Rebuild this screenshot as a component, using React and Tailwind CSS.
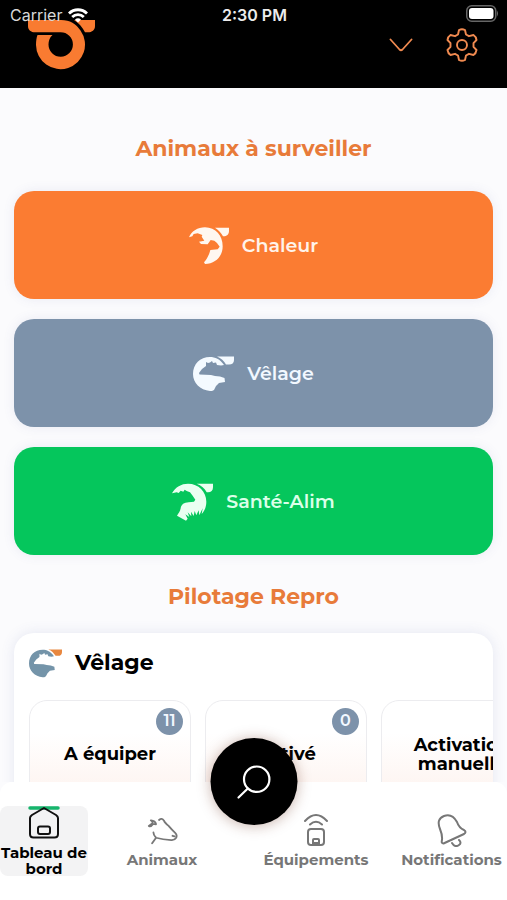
const heading = 'text-center text-[22px] leading-7 font-bold text-[#e87b3a]';

function BrandLogo() {
  return (
    <svg width="68" height="50" viewBox="0 0 68 50" aria-hidden="true">
      <path d="M0 0H33C42 0 48 4 52.500 10.500A24.500 24.500 0 1 1 8 25C8 21 8.500 17.500 9.500 15H24.500C21.500 17.500 20.500 21 20.500 24.500A12.200 12.200 0 1 0 32.500 12.300H7C3 12.300 0 10 0 6Z" fill="#f97b31" />
      <path d="M46 0H67V6C67 10 64 12.300 60 12.300H57C54 7 51 3 46 0Z" fill="#f97b31" />
    </svg>
  );
}

function HeatIcon() {
  return (
    <svg width="40" height="38" viewBox="0 0 120 114" fill="#fff7f0" aria-hidden="true">
      <path d="M0 31C8 12 26 1 48 1C80 1 101 26 101 58C101 88 80 110 48 111L45 106C54 96 60 84 64 69L86 67L92 59L84 48L76 41L65 39L56 52L36 51L30 44L46 41L38 29L40 24L26 19L14 21L10 28Z" />
      <path d="M78 2H120V12C120 22 113 28 104 28H102C96 17 88 8 78 2Z" />
    </svg>
  );
}

function CalvingIcon({ size = 41, color = '#f4faff', accent = '#f4faff' }) {
  return (
    <svg width={size} height={size * 36 / 41} viewBox="0 0 41 36" aria-hidden="true">
      <path d="M31 9C27 3 22 1 17 1C7 1 0 8 0 18C0 27 7 34 17 35L19 35L21 34L23 30L26 27L32 26L31.500 22L27 20.500L22 20L18 19L6.500 18.500L6 17L9 13L13 10L13 6L15 7L17 6.500L19 5L20 7L23 6.500L24 9L28 9.500Z" fill={color} />
      <path d="M24 0.500H41V4C41 7 39 8.500 36 8.500H33C31 5 28 2 24 0.500Z" fill={accent} />
    </svg>
  );
}

function HealthIcon() {
  return (
    <svg width="41" height="38" viewBox="0 0 123 114" fill="#eafff1" aria-hidden="true">
      <path d="M0 31C10 12 28 2 48 2C80 2 103 26 103 56C103 70 98 84 89 93L92 76L82 97L80 82L73 97L68 84L65 99L57 86L58 100L47 88L52 102L40 94L47 107L42 113L15 98C20 90 24 86 26 76C28 64 36 59 50 58L66 56L70 50L62 38L54 28L44 24L38 20L34 26L26 23L20 30L14 28Z" />
      <path d="M74 2H123V13C123 23 117 28 108 28H104C98 16 88 7 74 2Z" />
    </svg>
  );
}

function Watch({ color, label, children }) {
  return (
    <button type="button" className={`flex h-[108px] w-full items-center justify-center gap-[13px] rounded-[20px] pt-px text-[19px] leading-6 font-semibold shadow-[0_0_12px_rgba(80,90,160,0.10)] ${color}`}>
      {children}
      <span>{label}</span>
    </button>
  );
}

function Tile({ count, children }) {
  return (
    <button type="button" className="relative flex h-[110px] w-[162px] shrink-0 items-center justify-center rounded-[18px] border border-[#ececef] bg-linear-to-b from-white from-30% to-[#fdf1ec] text-center text-[18px] leading-[19px] font-bold text-black">
      {count !== undefined && (
        <span className="absolute top-[7px] right-[7px] flex size-[27px] items-center justify-center rounded-full bg-[#7d92aa] text-base font-semibold text-[#f2f8ff]">{count}</span>
      )}
      <span className="w-[110px]">{children}</span>
    </button>
  );
}

function NavItem({ label, active, children }) {
  return (
    <a href="#" aria-current={active ? 'page' : undefined} className={`flex h-[70px] flex-col items-center rounded-lg text-center text-[15px] leading-4 font-bold ${active ? 'gap-[5px] bg-[#f3f3f4] text-black' : 'gap-[5px] pt-[7px] text-[#777777]'}`}>
      <span className="flex h-[34px] shrink-0 items-center">{children}</span>
      <span>{label}</span>
    </a>
  );
}

export default function App() {
  return (
    <div className="flex h-screen flex-col overflow-hidden bg-[#fbfbfd] font-['Montserrat','Inter',sans-serif]">
      <header className="relative flex h-[88px] shrink-0 items-start justify-between bg-black px-7 pt-5">
        <div className="absolute inset-x-0 top-0 grid h-[30px] grid-cols-3 items-center pr-2 pl-[10px] font-['Inter',sans-serif] text-base leading-5 text-[#d8d8d8]">
          <span className="flex items-center gap-[6px]">
            Carrier
            <svg width="20" height="15" viewBox="0 0 20 15" fill="none" stroke="#fff" strokeWidth="2.800" aria-hidden="true">
              <path d="M1 5.500C6 0.500 14 0.500 19 5.500M4.200 9C7.500 5.800 12.500 5.800 15.800 9" />
              <path d="M10 14.500L7 11.500Q10 9 13 11.500Z" fill="#fff" stroke="none" />
            </svg>
          </span>
          <span className="text-center font-semibold text-[#ececec]">2:30 PM</span>
          <svg className="mb-[3px] justify-self-end" width="33" height="17" viewBox="0 0 33 17" aria-hidden="true">
            <rect x="0.750" y="0.750" width="29" height="15.500" rx="5" fill="none" stroke="#666" strokeWidth="1.500" />
            <rect x="3" y="3" width="24.500" height="11" rx="3" fill="#fff" />
            <path d="M31 5.500Q33 8.500 31 11.500Z" fill="#666" />
          </svg>
        </div>
        <BrandLogo />
        <div className="flex items-center gap-8 pt-2">
          <button type="button" aria-label="Ouvrir la liste">
            <svg width="24" height="14" viewBox="0 0 24 14" fill="none" stroke="#f08a50" strokeWidth="1.800" strokeLinecap="round" strokeLinejoin="round" aria-hidden="true"><path d="M1.500 1.500L10.500 11.500Q12 13 13.500 11.500L22.500 1.500" /></svg>
          </button>
          <button type="button" aria-label="Paramètres">
            <svg width="34" height="34" viewBox="0 0 34 34" fill="none" stroke="#f08a50" strokeWidth="1.900" strokeLinejoin="round" aria-hidden="true">
              <path d="M14 2Q17 0.500 20 2L21 6.500L24 8.200L28.500 7Q31 8.500 31.500 12L28.500 15.200V18.800L31.500 22Q31 25.500 28.500 27L24 25.800L21 27.500L20 32Q17 33.500 14 32L13 27.500L10 25.800L5.500 27Q3 25.500 2.500 22L5.500 18.800V15.200L2.500 12Q3 8.500 5.500 7L10 8.200L13 6.500Z" />
              <circle cx="17" cy="17" r="5" />
            </svg>
          </button>
        </div>
      </header>

      <main className="min-h-0 flex-1 overflow-y-auto px-[14px] pt-[47px] [scrollbar-width:none]">
        <h1 className={heading}>Animaux à surveiller</h1>
        <div className="mt-7 flex flex-col gap-5">
          <Watch color="bg-[#fb7c32] text-[#fff3ea]" label="Chaleur"><HeatIcon /></Watch>
          <Watch color="bg-[#7d92aa] text-[#f2f8ff]" label="Vêlage"><CalvingIcon /></Watch>
          <Watch color="bg-[#05c65c] text-[#dcffe9]" label="Santé-Alim"><HealthIcon /></Watch>
        </div>
        <h2 className={`mt-7 ${heading}`}>Pilotage Repro</h2>
        <section className="mt-[22px] rounded-[20px] bg-white pt-4 pb-5 pl-[15px] shadow-[0_0_14px_rgba(80,90,160,0.13)]">
          <div className="flex items-center gap-[13px]">
            <CalvingIcon size={33} color="#7494a9" accent="#e8873f" />
            <h3 className="text-[22px] leading-7 font-bold text-black">Vêlage</h3>
          </div>
          <div className="mt-[22px] flex gap-[14px] overflow-x-auto [scrollbar-width:none]">
            <Tile count={11}>A équiper</Tile>
            <Tile count={0}>Activé</Tile>
            <Tile>Activation manuelle</Tile>
          </div>
        </section>
      </main>

      <nav aria-label="Navigation principale" className="relative h-[118px] shrink-0 rounded-t-xl bg-white pt-6">
        <button type="button" aria-label="Rechercher" className="absolute -top-[44px] left-1/2 flex size-[87px] -translate-x-1/2 items-center justify-center rounded-full bg-black shadow-[0_1px_14px_rgba(100,40,20,0.35)]">
          <svg width="36" height="36" viewBox="0 0 36 36" fill="none" stroke="#fff" strokeWidth="2.200" strokeLinecap="round" aria-hidden="true"><circle cx="21.200" cy="15.200" r="12.700" /><path d="M12.300 24.500L3 33.500" /></svg>
        </button>
        <div className="grid grid-cols-[88fr_148fr_160fr_111fr]">
          <NavItem label="Tableau de bord" active>
            <svg width="32" height="34" viewBox="0 0 32 34" fill="none" aria-hidden="true">
              <path d="M2 2H30" stroke="#16b56c" strokeWidth="3.500" strokeLinecap="round" />
              <path d="M16 2L4 9Q2 10.500 2 12V28Q2 31.500 5.500 31.500H26.500Q30 31.500 30 28V12Q30 10.500 28 9Z" stroke="#111" strokeWidth="2" strokeLinejoin="round" />
              <rect x="10" y="20.500" width="12" height="7.500" rx="2" stroke="#111" strokeWidth="2" />
            </svg>
          </NavItem>
          <NavItem label="Animaux">
            <svg width="32" height="29" viewBox="0 0 96 88" fill="none" stroke="#777" strokeWidth="5.500" strokeLinecap="round" strokeLinejoin="round" aria-hidden="true">
              <path d="M39 12Q48 4 54 14Q56 20 68 30Q78 42 88 51Q95 58 91 66Q86 74 76 73Q50 72 30 66Q22 58 22 50M30 66L18 83M8 30Q14 34 21 24L30 25Q28 14 14 13Q22 18 18 23L8 30M80 60L86 62" />
            </svg>
          </NavItem>
          <NavItem label="Équipements">
            <svg width="24" height="34" viewBox="0 0 24 34" fill="none" stroke="#777" strokeWidth="2" strokeLinecap="round" aria-hidden="true">
              <path d="M1 8Q12 -4 23 8M6 11.500Q12 6 18 11.500" /><rect x="4" y="16" width="16" height="16" rx="3" /><path d="M9 32V27Q9 26 10 26H14Q15 26 15 27V32M9 30H15" />
            </svg>
          </NavItem>
          <NavItem label="Notifications">
            <svg width="30" height="33" viewBox="0 0 30 33" fill="none" stroke="#777" strokeWidth="2" strokeLinecap="round" strokeLinejoin="round" aria-hidden="true">
              <path d="M6.500 29.500Q4 29.500 5 26Q5.500 21 3 15Q-1 5 7 2Q15 -1 20 8Q22 14 27 16Q30 18 27 20Z" /><path d="M15 29Q18 34 22 31Q25 29 22 26" />
            </svg>
          </NavItem>
        </div>
      </nav>
    </div>
  );
}
